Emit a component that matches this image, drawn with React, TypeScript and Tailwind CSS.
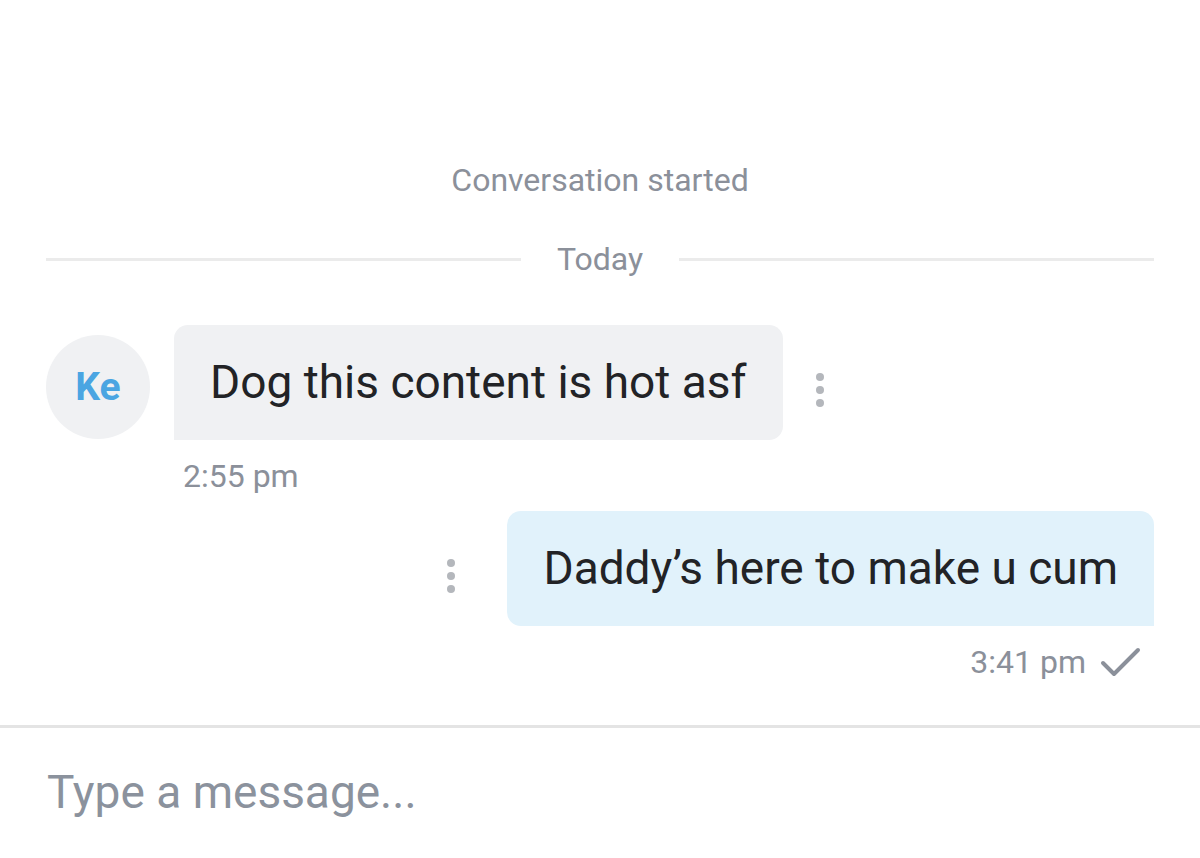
function Dots() {
  return (
    <div className="flex flex-col items-center gap-[5px]">
      <span className="h-[8px] w-[8px] rounded-full bg-[#b4b7bc]" />
      <span className="h-[8px] w-[8px] rounded-full bg-[#b4b7bc]" />
      <span className="h-[8px] w-[8px] rounded-full bg-[#b4b7bc]" />
    </div>
  )
}

export default function App() {
  return (
    <div className="flex h-[858px] w-full flex-col overflow-hidden bg-white font-['Roboto',sans-serif]">
      <div className="pt-[162px] text-center text-[32px] leading-[36px] text-[#8b909a]">
        Conversation started
      </div>

      <div className="mt-[43px] flex items-center px-[46px]">
        <div className="h-[3px] flex-1 bg-[#ebebeb]" />
        <div className="px-[36px] text-[32px] leading-[36px] text-[#8b909a]">Today</div>
        <div className="h-[3px] flex-1 bg-[#ebebeb]" />
      </div>

      <div className="mt-[48px] flex items-start pl-[46px]">
        <div className="mt-[10px] flex h-[104px] w-[104px] items-center justify-center rounded-full bg-[#f0f1f3] text-[39px] font-bold text-[#4aa5e2]">
          Ke
        </div>
        <div className="ml-[24px] flex h-[115px] items-center rounded-[14px] rounded-bl-none bg-[#f0f1f3] px-[36px] text-[46px] text-[#222326]">
          Dog this content is hot asf
        </div>
        <div className="ml-[33px] self-center pt-[14px]">
          <Dots />
        </div>
      </div>

      <div className="mt-[18px] pl-[183px] text-[32px] leading-[36px] text-[#8b909a]">2:55 pm</div>

      <div className="mt-[17px] flex items-center justify-end pr-[46px]">
        <div className="mr-[52px] pt-[14px]">
          <Dots />
        </div>
        <div className="flex h-[115px] items-center rounded-[14px] rounded-br-none bg-[#e1f2fb] px-[36px] text-[46px] text-[#222326]">
          Daddy’s here to make u cum
        </div>
      </div>

      <div className="mt-[18px] flex items-center justify-end gap-[14px] pr-[58px] text-[32px] leading-[36px] text-[#8b909a]">
        <span>3:41 pm</span>
        <svg width="42" height="32" viewBox="0 0 42 32" fill="none" className="text-[#8b909a]">
          <polyline
            points="3,17 14,28 38,4"
            stroke="currentColor"
            strokeWidth="4"
            strokeLinecap="round"
            strokeLinejoin="round"
          />
        </svg>
      </div>

      <div className="mt-[45px] h-[3px] w-full bg-[#e4e4e4]" />

      <div className="pl-[47px] pt-[38px] text-[46px] leading-[52px] text-[#8b929d]">Type a message...</div>
    </div>
  )
}
